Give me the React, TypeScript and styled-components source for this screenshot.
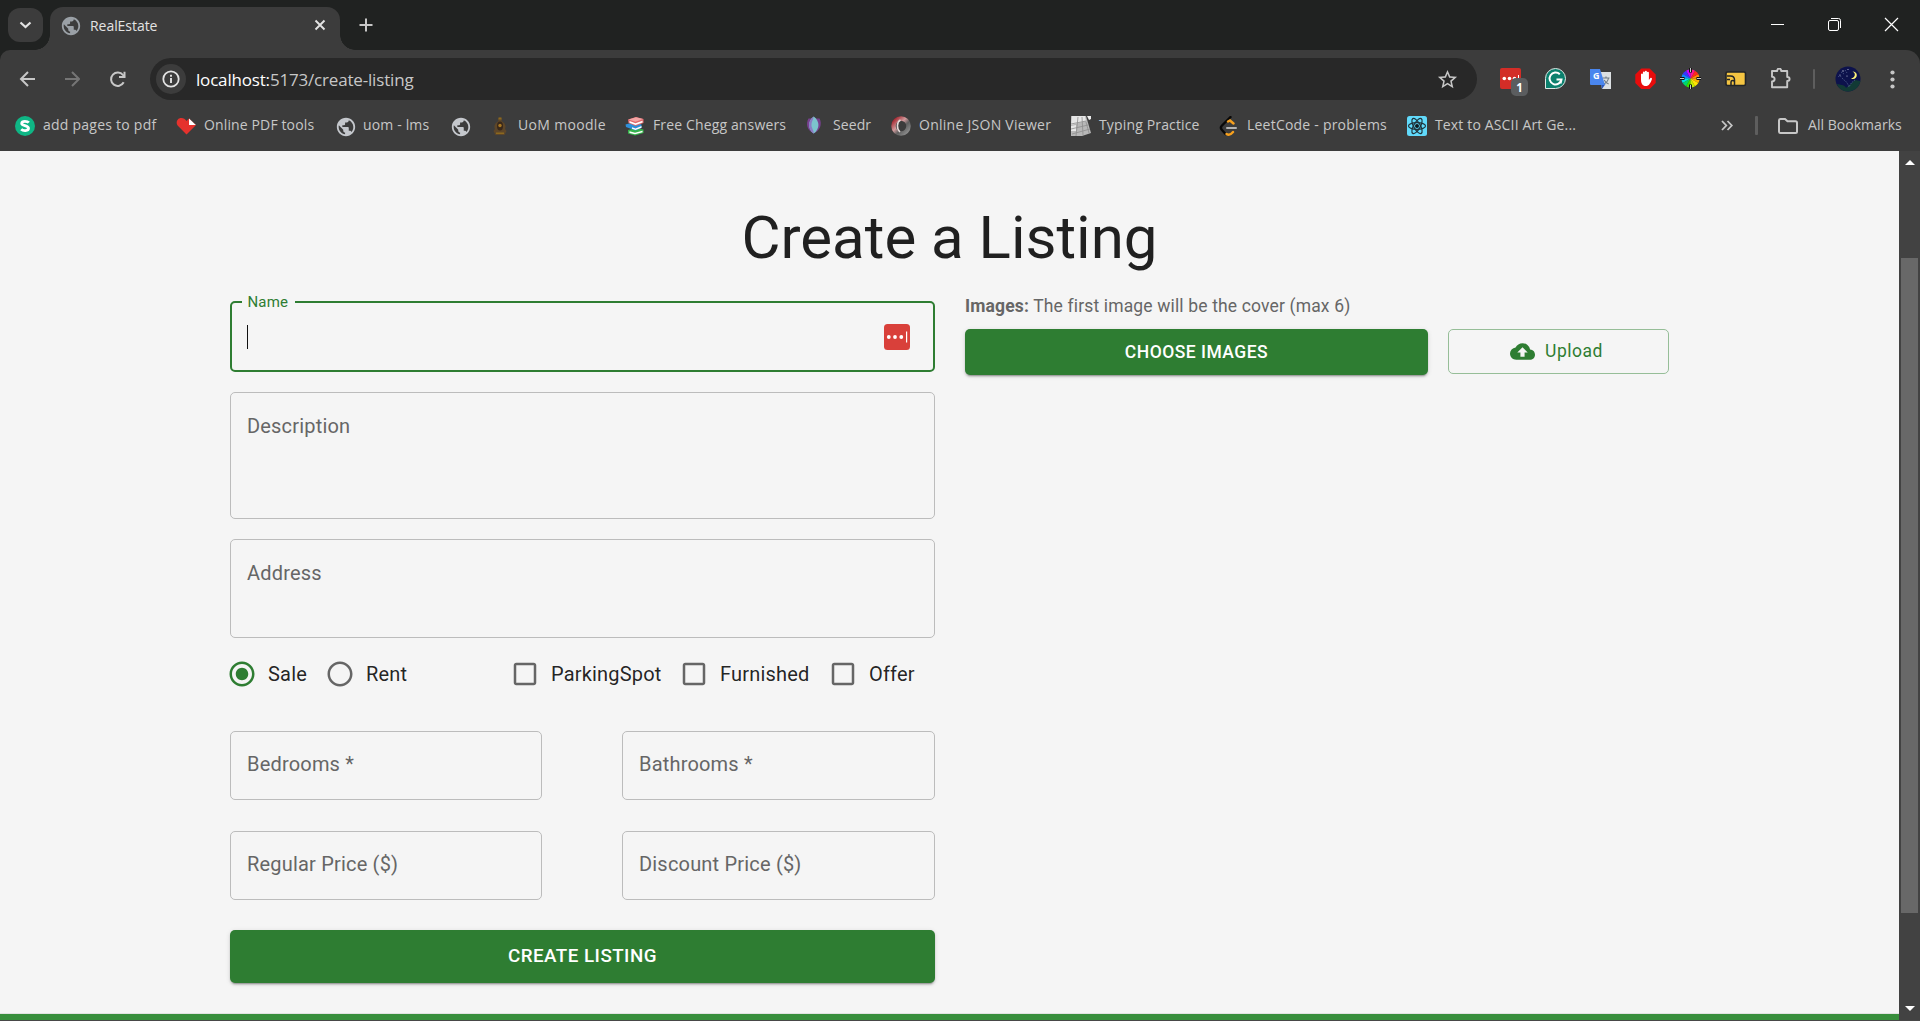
import React from "react";
import styled, { createGlobalStyle, css } from "styled-components";
import {
  MdCheckBoxOutlineBlank,
  MdCloudUpload,
  MdPublic,
  MdRadioButtonChecked,
  MdRadioButtonUnchecked,
  MdStarBorder,
} from "react-icons/md";

const uiFont = `"Open Sans", "Noto Sans", sans-serif`;
const formFont = `Roboto, "Liberation Sans", sans-serif`;
const green = "#2e7d32";

const GlobalStyle = createGlobalStyle`
  *, *::before, *::after { box-sizing: border-box; }
  body { margin: 0; background: #3c3c3c; overflow: hidden; }
  button { font: inherit; border: 0; padding: 0; background: none; color: inherit; }
  svg { display: block; flex: none; }
`;

const Window = styled.div`
  display: flex;
  flex-direction: column;
  width: 1920px;
  height: 1021px;
  background: #202221;
  overflow: hidden;
`;

/* ---------- tab strip ---------- */

const TabStrip = styled.header`
  display: flex;
  height: 50px;
  padding-left: 8px;
  font-family: ${uiFont};
`;

const TabSearch = styled.button`
  display: grid;
  place-items: center;
  width: 35px;
  height: 34px;
  margin-top: 8px;
  border-radius: 12px;
  background: #3c3c3c;
`;

const Tab = styled.div`
  position: relative;
  display: flex;
  align-items: center;
  width: 290px;
  height: 43px;
  margin: 7px 0 0 7px;
  padding: 0 14px 7px 10px;
  border-radius: 13px 13px 0 0;
  background: #3c3c3c;
  color: #e3e3e3;

  &::before,
  &::after {
    content: "";
    position: absolute;
    bottom: 0;
    width: 15px;
    height: 15px;
  }
  &::before {
    left: -15px;
    background: radial-gradient(circle at 0 0, transparent 14.5px, #3c3c3c 15px);
  }
  &::after {
    right: -15px;
    background: radial-gradient(circle at 100% 0, transparent 14.5px, #3c3c3c 15px);
  }
`;

const Text = styled.span<{ $size: number; $spacing?: number; $width?: number }>`
  flex: none;
  font-size: ${(p) => p.$size}px;
  letter-spacing: ${(p) => p.$spacing ?? 0}px;
  ${(p) => p.$width !== undefined && css`width: ${p.$width}px;`}
  white-space: nowrap;
`;

const BookmarkText = styled(Text)`
  padding-bottom: 2px;
`;

const TabTitle = styled(Text)`
  flex: 1;
  margin-left: 10px;
`;

const NewTab = styled.button`
  display: grid;
  place-items: center;
  width: 35px;
  height: 34px;
  margin: 8px 0 0 8px;
`;

const WindowButtons = styled.div`
  display: flex;
  align-items: center;
  gap: 42px;
  margin-left: auto;
  padding: 0 21px 2px 0;
`;

/* ---------- toolbar ---------- */

const Toolbar = styled.div`
  display: flex;
  align-items: center;
  height: 58px;
  padding: 0 20px 0 19px;
  border-radius: 10px 14px 0 0;
  background: #3c3c3c;
  font-family: ${uiFont};
`;

const NavButtons = styled.div`
  display: flex;
  align-items: center;
  gap: 29px;
  width: 131px;
`;

const Omnibox = styled.div`
  display: flex;
  align-items: center;
  width: 1327px;
  height: 42px;
  padding: 0 18px 0 6px;
  border-radius: 21px;
  background: #282828;
  color: #c7c7c7;

  b {
    font-weight: 400;
    color: #ffffff;
  }
`;

const SiteInfo = styled.div`
  display: grid;
  place-items: center;
  width: 30px;
  height: 30px;
  margin-right: 10px;
  border-radius: 50%;
  background: #3c3c3c;
`;

const Url = styled(Text)`
  flex: 1;
  padding-top: 1px;
`;

const Extensions = styled.div`
  display: flex;
  align-items: center;
  gap: 23px;
  margin-left: 23px;
`;

const ExtensionSlot = styled.div`
  position: relative;
  width: 22px;
  height: 22px;
`;

const CountBadge = styled.span`
  position: absolute;
  left: 11px;
  top: 10px;
  display: grid;
  place-items: center;
  width: 17px;
  height: 18px;
  border-radius: 5px;
  background: #5b5d5f;
  color: #ffffff;
  font-size: 11.5px;
  font-weight: 700;
`;

const Divider = styled.i<{ $width: number; $height: number; $margin?: string }>`
  width: ${(p) => p.$width}px;
  height: ${(p) => p.$height}px;
  margin: ${(p) => p.$margin ?? "0"};
  border-radius: 1px;
  background: #5e5e5e;
`;

const Profile = styled.div`
  display: flex;
  align-items: center;
  gap: 29px;
  margin-left: 20px;
`;

/* ---------- bookmarks ---------- */

const BookmarkBar = styled.nav`
  display: flex;
  align-items: center;
  height: 43px;
  padding: 0 18px 8px 15px;
  background: #3c3c3c;
  color: #c7c7c7;
  font-family: ${uiFont};
`;

const Bookmark = styled.a`
  display: flex;
  align-items: center;
  gap: 8px;
  height: 24px;
  margin-right: 20px;
`;

const AllBookmarks = styled.div`
  display: flex;
  align-items: center;
  margin-left: auto;

  ${BookmarkText} {
    margin-left: 9px;
  }
`;

/* ---------- page ---------- */

const Viewport = styled.div`
  display: flex;
  height: 870px;
  border-bottom: 1px solid #474747;
`;

const Page = styled.main`
  display: flex;
  flex-direction: column;
  width: 1899px;
  background: #f5f5f5;
  font-family: ${formFont};
  color: rgba(0, 0, 0, 0.87);
`;

const Title = styled.h1`
  margin: 52px 0 0;
  font-size: 60px;
  font-weight: 400;
  line-height: 70px;
  text-align: center;
`;

const Columns = styled.form`
  display: grid;
  grid-template-columns: 705px 704px;
  gap: 30px;
  width: 1439px;
  margin: 28px 0 0 230px;
`;

const FormColumn = styled.div`
  display: flex;
  flex-direction: column;
`;

const Field = styled.label<{ $height: number; $gap?: number; $focused?: boolean }>`
  position: relative;
  display: flex;
  align-items: flex-start;
  height: ${(p) => p.$height}px;
  margin-top: ${(p) => p.$gap ?? 0}px;
  padding: ${(p) => (p.$gap ? 21 : 20)}px 16px 0;
  border: 1px solid #bcbcbc;
  border-radius: 5px;
  color: #666666;
  font-size: 20px;
  line-height: 25px;
  letter-spacing: 0.19px;
  ${(p) =>
    p.$focused &&
    css`
      padding: 21px 23px 0 15px;
      border: 2px solid ${green};
      justify-content: space-between;
    `}
`;

const FloatingLabel = styled.span`
  position: absolute;
  left: 10px;
  top: -11px;
  width: 53px;
  padding-left: 5.5px;
  background: #f5f5f5;
  color: ${green};
  font-size: 15px;
  line-height: 20px;
  letter-spacing: 0.14px;
`;

const Caret = styled.i`
  width: 1px;
  height: 24px;
  margin-top: 1px;
  background: #111111;
`;

const Options = styled.div`
  display: flex;
  align-items: center;
  height: 30px;
  margin: 21px 0 0 -3px;
  font-size: 20px;
  letter-spacing: 0.19px;
`;

const Option = styled.label<{ $width: number; $checked?: boolean }>`
  display: flex;
  align-items: center;
  gap: 11px;
  flex: none;
  width: ${(p) => p.$width}px;

  svg {
    color: ${(p) => (p.$checked ? green : "#666666")};
  }
`;

const FieldGrid = styled.div`
  display: grid;
  grid-template-columns: 312px 313px;
  gap: 31px 80px;
  margin-top: 42px;
`;

const Button = styled.button<{ $large?: boolean }>`
  height: ${(p) => (p.$large ? 53 : 46)}px;
  border-radius: 5px;
  background: ${green};
  box-shadow: 0 3px 1px -2px rgba(0, 0, 0, 0.2), 0 2px 2px rgba(0, 0, 0, 0.14),
    0 1px 5px rgba(0, 0, 0, 0.12);
  color: #ffffff;
  font-size: ${(p) => (p.$large ? 18.75 : 17.5)}px;
  font-weight: 500;
  letter-spacing: 0.48px;
`;

const CreateButton = styled(Button)`
  margin-top: 30px;
  padding-bottom: 2px;
`;

const Hint = styled.p`
  margin: -8px 0 0;
  height: 26px;
  color: #666666;
  font-size: 17.5px;
  line-height: 26px;
  letter-spacing: 0.15px;

  b {
    font-weight: 700;
  }
`;

const ImageActions = styled.div`
  display: grid;
  grid-template-columns: 463px 221px;
  gap: 20px;
  align-items: start;
  margin-top: 10px;
`;

const UploadButton = styled.button`
  display: flex;
  align-items: center;
  justify-content: center;
  gap: 10px;
  height: 45px;
  padding-right: 4px;
  border: 1px solid #96be98;
  border-radius: 5px;
  color: ${green};
  font-size: 17.5px;
  letter-spacing: 0.5px;

  span {
    padding-bottom: 2px;
  }
`;

const Footer = styled.footer`
  height: 7px;
  margin-top: auto;
  border-top: 1px solid #e2e2e2;
  background: #388e3c;
`;

const Scrollbar = styled.aside`
  display: flex;
  flex-direction: column;
  align-items: center;
  justify-content: space-between;
  width: 21px;
  height: 869px;
  padding: 9px 0 9px;
  background: #424242;
`;

const Thumb = styled.i`
  width: 17px;
  height: 655px;
  margin: 93px 0 auto;
  background: #686868;
`;

const Arrow = styled.i<{ $down?: boolean }>`
  border: 5px solid transparent;
  ${(p) => (p.$down ? "border-top-color: #fff; border-bottom: 0;" : "border-bottom-color: #fff; border-top: 0;")}
`;

/* ---------- icons ---------- */

const GlobeBox = styled.span`
  display: grid;
  place-items: center;
  flex: none;
  width: 20px;
  height: 20px;
`;

const Globe = ({ color = "#c4c7cc" }) => (
  <GlobeBox>
    <MdPublic size={22} color={color} />
  </GlobeBox>
);

const SmallpdfIcon = () => (
  <svg width="20" height="20" viewBox="0 0 20 20">
    <circle cx="10" cy="10" r="10" fill="#0fb685" />
    <path d="M13.8 6.600C12.600 5.200 7 4.400 6.700 7.400c-.2 2.800 6.800 1.800 6.800 4.900 0 3-5.600 2.700-7.300 1" fill="none" stroke="#fff" strokeWidth="2.8" />
  </svg>
);

const HeartIcon = () => (
  <svg width="20" height="20" viewBox="0 0 20 20">
    <path d="M10.5 18.500 1.600 9.500C-.5 6.600 1.200 2 5.200 2c2.500 0 4 1.200 5.300 3L13 2.500l7 6.500z" fill="#e5322d" />
    <path d="M13 2.500V9h6.800z" fill="#fff" />
  </svg>
);

const CrestIcon = () => (
  <svg width="20" height="20" viewBox="0 0 20 20">
    <path d="M10 1 12 3l-.5 2C15 7 16.500 10 15 13l1.500 2-2 4h-9l-2-4L5 13C3.500 10 5 7 8.500 5L8 3z" fill="#5d4629" />
    <ellipse cx="10" cy="10" rx="3" ry="4.500" fill="#38281b" />
    <circle cx="10" cy="9.500" r="1.700" fill="#a77621" />
    <path d="M8.500 1.500h3v2h-3zM6 16.500h8V18H6z" fill="#8c681e" />
  </svg>
);

const BooksIcon = () => (
  <svg width="20" height="20" viewBox="0 0 20 20">
    <path d="m3 14 8-2 7.500 1.500v3.500L10 19.500 3 17.500z" fill="#36b34a" />
    <path d="m4.500 15.300 5.500 1.400 7.500-2v1.600L10 18.300l-5.500-1.200z" fill="#fff" />
    <path d="M.5 8.500 9 6l7.500 2.500V12l-6 2.500L1 11z" fill="#2e8fd9" />
    <path d="m7 11.300 3.500 1.200 6-2.400v1.600l-6 2.300-3.500-1.300z" fill="#fff" />
    <path d="m3 3.500 8-2.500 7.500 2v4l-8 3-7-3z" fill="#e2696c" />
    <path d="m4.500 5 6 2.300 7-2.500v1.700l-7 2.500-6-2.300z" fill="#fff" />
    <path d="m3.500 3.500 7.500-2.300 7 1.800-7.500 2.700z" fill="#f3a5a5" />
  </svg>
);

const SeedrIcon = () => (
  <svg width="20" height="20" viewBox="0 0 20 20">
    <path d="M3.500 2.500C.500 8 2 14 8.500 17.500 15 15 17.500 8 14.500 2.500z" fill="#77408f" />
    <path d="M8.700.5C2.500 5 2.500 13 8.700 17.500 15 13 15 5 8.700.5z" fill="#7cc3cd" />
    <path d="M8.700.5C2.500 5 2.500 13 8.700 17.500 9 14 6 12 6.500 8c.2-3 2-4.500 2.200-7.500z" fill="#8b7cc4" />
  </svg>
);

const JsonIcon = () => (
  <svg width="20" height="20" viewBox="0 0 20 20">
    <defs>
      <linearGradient id="json" x1="0" y1="0" x2="1" y2="1">
        <stop offset="0" stopColor="#a01822" />
        <stop offset=".4" stopColor="#d09a9c" />
        <stop offset=".62" stopColor="#5e5e5e" />
        <stop offset="1" stopColor="#929292" />
      </linearGradient>
    </defs>
    <circle cx="10" cy="10" r="7.500" fill="none" stroke="url(#json)" strokeWidth="4.500" />
    <path d="M9.500 4C5.500 6 5.500 13 9 16" fill="none" stroke="#e8dcdc" strokeWidth="1.600" />
  </svg>
);

const KeyboardIcon = () => (
  <svg width="20" height="20" viewBox="0 0 20 20">
    <path d="M0 0h15l5 17-9 3H0z" fill="#b7b7b7" />
    <path d="M1 0h13l1 5L0 9zM0 10l5-1v6H0z" fill="#e6e6e6" />
    <path d="M0 8 15 5M0 13l17-4M1 18l18-5M7 1 5 20M11 1l1 18M15 6l3 11" stroke="#8d8d8d" strokeWidth=".8" />
    <path d="M16 0h4v3l-2 1z" fill="#eee" />
  </svg>
);

const LeetIcon = () => (
  <svg width="20" height="20" viewBox="0 0 20 20">
    <path d="M11.500 1 3 9.500c-1.500 1.500-1.500 3 0 4.500l3.500 4" fill="none" stroke="#080808" strokeWidth="2.400" strokeLinecap="round" />
    <path d="m9 5.500 2-1 3.500 3M7.500 18c2.500 1.500 4.500.5 6.500-2" fill="none" stroke="#f6a01e" strokeWidth="2.400" strokeLinecap="round" />
    <path d="M8 12h9" stroke="#b3b3b3" strokeWidth="2" strokeLinecap="round" />
  </svg>
);

const ReactIcon = () => (
  <svg width="20" height="20" viewBox="0 0 20 20">
    <rect width="20" height="20" rx="2.500" fill="#61dafb" />
    <g fill="none" stroke="#20343c" strokeWidth="1.200">
      <ellipse cx="10" cy="10" rx="8.500" ry="3.300" />
      <ellipse cx="10" cy="10" rx="8.500" ry="3.300" transform="rotate(60 10 10)" />
      <ellipse cx="10" cy="10" rx="8.500" ry="3.300" transform="rotate(120 10 10)" />
    </g>
    <circle cx="10" cy="10" r="2" fill="#10191d" />
  </svg>
);

const LastPassIcon = () => (
  <svg width="22" height="22" viewBox="0 0 22 22">
    <rect width="21" height="21" rx="2" fill="#d32d27" />
    <g fill="#fff">
      <circle cx="4.300" cy="10.500" r="1.800" />
      <circle cx="9.500" cy="10.500" r="1.800" />
      <circle cx="14.500" cy="10.500" r="1.800" />
      <path d="M18 7h1v7h-1z" />
    </g>
  </svg>
);

const GrammarlyIcon = () => (
  <svg width="22" height="22" viewBox="0 0 22 22">
    <path d="M.5 10.500a10 10 0 1 1 10 10H.5z" fill="#0b806d" stroke="#dce9e6" />
    <path d="M14.800 6.200A6 6 0 1 0 16.500 11.500H11.500M16.500 11.500l-1 4" fill="none" stroke="#fff" strokeWidth="2" />
  </svg>
);

const TranslateLetter = styled.span`
  position: absolute;
  left: 3px;
  top: 2px;
  color: #fff;
  font: 700 9px/12px ${uiFont};
`;

const TranslateIcon = () => (
  <>
    <svg width="22" height="22" viewBox="0 0 22 22">
      <path d="M9 4h12v17H12z" fill="#dce0e3" />
      <path d="M12.500 10h7M16 8.500V10M18.500 10c-.5 3-2.500 5-4.500 6M14.200 12c1 2 2.500 3.500 4.500 4" fill="none" stroke="#707b84" strokeWidth="1.100" />
      <path d="M11 16h4.500L12 21z" fill="#2b56b8" />
      <path d="M0 1h10l5 16H1a1 1 0 0 1-1-1z" fill="#4a86ee" />
    </svg>
    <TranslateLetter>G</TranslateLetter>
  </>
);

const AdblockIcon = () => (
  <svg width="22" height="22" viewBox="0 0 22 22">
    <path d="M6.300.5h8.400l6 6v8.400l-6 6H6.300l-6-6V6.500z" fill="#e80c0c" />
    <path d="M6 11.500V6.300a1 1 0 0 1 1.900 0v4V4.500a1 1 0 0 1 2 0v5V3.700a1 1 0 0 1 2 0v5.800V4.700a1 1 0 0 1 2 0V12l1.500-2a1 1 0 0 1 1.500 1.200C15.500 15 14 18 10.800 18 7.500 18 6 15.500 6 11.500z" fill="#fff" />
  </svg>
);

const wheelColors = ["#ffb000", "#ff8a00", "#ff2a1a", "#ff1493", "#c800ff", "#3b32ff", "#0a86ff", "#00e0e8", "#00d96a", "#35e000", "#c6f000", "#ffe600"];

const ColorWheelIcon = () => (
  <svg width="22" height="22" viewBox="-10.500 -10.500 22 22">
    {wheelColors.map((color, i) => (
      <path key={color} d="M0 0 0-9A9 9 0 0 1 4.500-7.800z" fill={color} transform={`rotate(${90 - i * 30})`} />
    ))}
    <path d="M0-10.500V-6M0 6v4.500M-10.500 0H-6M6 0h4.500" stroke="#111" strokeWidth="3" />
    <path d="M0-10.500v4M0 6.500v4M-10.500 0h4M6.500 0h4" stroke="#c8c8c8" strokeWidth="1" />
  </svg>
);

const YellowCardIcon = () => (
  <svg width="22" height="22" viewBox="0 0 22 22">
    <rect x="1" y="4" width="19.500" height="13.500" rx="1.500" fill="#f5c542" stroke="#222527" strokeWidth="1.600" />
    <path d="M2 8h3.500c2.500 0 4 1.200 4 4v5M6 17v-3c0-2 3.500-2 3.500 0M2 11.500h3" fill="none" stroke="#222527" strokeWidth="1.500" />
  </svg>
);

const PuzzleIcon = () => (
  <svg width="22" height="22" viewBox="0 0 22 22">
    <path d="M2 3h5.200c0-3.300 4-3.300 4 0h6v6c3.200 0 3.200 4 0 4v6.200H2v-5.700c3.500 0 3.500-4.800 0-4.800z" fill="none" stroke="#c7c7c7" strokeWidth="1.900" strokeLinejoin="round" />
  </svg>
);

const AvatarIcon = () => (
  <svg width="26" height="26" viewBox="0 0 26 26">
    <circle cx="13" cy="13" r="12.500" fill="#0d124c" />
    <path d="M2 18c5 1 8 1 9 4l9-8 5.500 1C24 22 18 25.500 13 25.500 8 25.500 3 22 2 18z" fill="#123a35" />
    <path d="M3 11c3-3 4 2 6 3s4 4 5 7c2-4 3-5 6-7M6 6l3 2M10 4l2 3" fill="none" stroke="#50608c" strokeWidth=".8" strokeDasharray="1.500 1" />
    <path d="M17.500 5.500c3.500 1.500 3 6-1.500 7 3 1.500 6-.5 5.800-3.500-.1-2-1.800-3.500-4.300-3.500z" fill="#fff27a" />
    <g fill="#bfc6db">
      <circle cx="8" cy="5" r=".7" />
      <circle cx="13" cy="3.500" r=".6" />
      <circle cx="5" cy="9" r=".6" />
      <circle cx="12" cy="10" r=".6" />
    </g>
  </svg>
);

const bookmarks: { icon: React.ReactNode; label?: string; width?: number; spacing?: number }[] = [
  { icon: <SmallpdfIcon />, label: "add pages to pdf", width: 113, spacing: 0.24 },
  { icon: <HeartIcon />, label: "Online PDF tools", width: 111, spacing: 0.13 },
  { icon: <Globe />, label: "uom - lms", width: 67, spacing: 0.15 },
  { icon: <Globe /> },
  { icon: <CrestIcon />, label: "UoM moodle", width: 87, spacing: 0.32 },
  { icon: <BooksIcon />, label: "Free Chegg answers", width: 132, spacing: 0.14 },
  { icon: <SeedrIcon />, label: "Seedr", width: 38, spacing: 0.1 },
  { icon: <JsonIcon />, label: "Online JSON Viewer", width: 132, spacing: 0.27 },
  { icon: <KeyboardIcon />, label: "Typing Practice", width: 100, spacing: 0.15 },
  { icon: <LeetIcon />, label: "LeetCode - problems", width: 140, spacing: 0.22 },
  { icon: <ReactIcon />, label: "Text to ASCII Art Ge...", width: 141, spacing: 0.15 },
];

const extensions = [GrammarlyIcon, TranslateIcon, AdblockIcon, ColorWheelIcon, YellowCardIcon, PuzzleIcon];

export default function App() {
  return (
    <Window>
      <GlobalStyle />
      <TabStrip>
        <TabSearch aria-label="Search tabs">
          <svg width="13" height="8" viewBox="0 0 13 8">
            <path d="m1.500 1.500 5 4.500 5-4.500" fill="none" stroke="#e3e3e3" strokeWidth="2.200" />
          </svg>
        </TabSearch>
        <Tab>
          <Globe color="#9aa0a6" />
          <TabTitle $size={14} $spacing={-0.05}>RealEstate</TabTitle>
          <svg width="12" height="12" viewBox="0 0 12 12">
            <path d="m1.500 1.500 9 9m0-9-9 9" stroke="#e3e3e3" strokeWidth="1.900" />
          </svg>
        </Tab>
        <NewTab aria-label="New tab">
          <svg width="14" height="14" viewBox="0 0 14 14">
            <path d="M7 .5v13M.5 7h13" stroke="#c7c7c7" strokeWidth="2" />
          </svg>
        </NewTab>
        <WindowButtons>
          <svg width="15" height="15" viewBox="0 0 15 15">
            <path d="M1 7.500h13" stroke="#fff" />
          </svg>
          <svg width="15" height="15" viewBox="0 0 15 15">
            <rect x="1.500" y="3.500" width="10" height="10" rx="1.500" fill="none" stroke="#fff" />
            <path d="M4 1.500h7.500a2 2 0 0 1 2 2V11" fill="none" stroke="#fff" />
          </svg>
          <svg width="15" height="15" viewBox="0 0 15 15">
            <path d="m1 1 13 13m0-13L1 14" stroke="#fff" strokeWidth="1.200" />
          </svg>
        </WindowButtons>
      </TabStrip>

      <Toolbar>
        <NavButtons>
          <svg width="16" height="16" viewBox="0 0 16 16">
            <path d="M16 8H2.300M9 1 2 8l7 7" fill="none" stroke="#c7c7c7" strokeWidth="2" />
          </svg>
          <svg width="16" height="16" viewBox="0 0 16 16">
            <path d="M1 8h13.700M8 1l7 7-7 7" fill="none" stroke="#757575" strokeWidth="2" />
          </svg>
          <svg width="17" height="17" viewBox="0 0 17 17">
            <path d="M14.700 11.300A6.700 6.700 0 1 1 14 4L15.500 6" fill="none" stroke="#c7c7c7" strokeWidth="2" />
            <path d="M15.500.8V6H10" fill="none" stroke="#c7c7c7" strokeWidth="2" />
          </svg>
        </NavButtons>
        <Omnibox>
          <SiteInfo>
            <svg width="18" height="18" viewBox="0 0 18 18">
              <circle cx="9" cy="9" r="7.700" fill="none" stroke="#e3e3e3" strokeWidth="1.800" />
              <path d="M9 8v5M9 4.800v1.900" stroke="#e3e3e3" strokeWidth="1.900" />
            </svg>
          </SiteInfo>
          <Url $size={17} $spacing={-0.18}>
            <b>localhost:</b>5173/create-listing
          </Url>
          <MdStarBorder size={23} color="#c7c7c7" />
        </Omnibox>
        <Extensions>
          <ExtensionSlot>
            <LastPassIcon />
            <CountBadge>1</CountBadge>
          </ExtensionSlot>
          {extensions.map((Icon, i) => (
            <ExtensionSlot key={i}>
              <Icon />
            </ExtensionSlot>
          ))}
          <Divider $width={2} $height={20} $margin="0 0 0 -2px" />
        </Extensions>
        <Profile>
          <AvatarIcon />
          <svg width="5" height="19" viewBox="0 0 5 19">
            <g fill="#c7c7c7">
              <circle cx="2.500" cy="2.500" r="2.100" />
              <circle cx="2.500" cy="9.500" r="2.100" />
              <circle cx="2.500" cy="16.500" r="2.100" />
            </g>
          </svg>
        </Profile>
      </Toolbar>

      <BookmarkBar>
        {bookmarks.map((b, i) => (
          <Bookmark key={i}>
            {b.icon}
            {b.label && (
              <BookmarkText $size={14} $width={b.width} $spacing={b.spacing}>
                {b.label}
              </BookmarkText>
            )}
          </Bookmark>
        ))}
        <AllBookmarks>
          <svg width="12" height="11" viewBox="0 0 12 11">
            <path d="m1 1 4.300 4.500L1 10M6.500 1l4.300 4.500L6.500 10" fill="none" stroke="#c7c7c7" strokeWidth="1.800" />
          </svg>
          <Divider $width={3} $height={19} $margin="0 19px 0 22px" />
          <svg width="22" height="18" viewBox="0 0 22 18">
            <path d="M2 3.500c0-1 .5-1.500 1.500-1.500H8l2.500 2.300h8c1 0 1.500.5 1.500 1.500v8.700c0 1-.5 1.500-1.500 1.500h-15C2.500 16 2 15.500 2 14.500z" fill="none" stroke="#c7c7c7" strokeWidth="2" />
          </svg>
          <BookmarkText $size={14} $width={94} $spacing={0.04}>
            All Bookmarks
          </BookmarkText>
        </AllBookmarks>
      </BookmarkBar>

      <Viewport>
        <Page>
          <Title>Create a Listing</Title>
          <Columns>
            <FormColumn>
              <Field $height={71} $focused>
                <FloatingLabel>Name</FloatingLabel>
                <Caret />
                <svg width="26" height="26" viewBox="0 0 26 26">
                  <rect width="26" height="26" rx="3.500" fill="#d9403a" />
                  <g fill="#fff">
                    <circle cx="4.800" cy="13" r="1.900" />
                    <circle cx="11" cy="13" r="1.900" />
                    <circle cx="17.300" cy="13" r="1.900" />
                    <path d="M22 7.500h1.200v11H22z" />
                  </g>
                </svg>
              </Field>
              <Field $height={127} $gap={20}>Description</Field>
              <Field $height={99} $gap={20}>Address</Field>
              <Options>
                <Option $width={98} $checked><MdRadioButtonChecked size={30} />Sale</Option>
                <Option $width={185}><MdRadioButtonUnchecked size={30} />Rent</Option>
                <Option $width={169}><MdCheckBoxOutlineBlank size={30} />ParkingSpot</Option>
                <Option $width={149}><MdCheckBoxOutlineBlank size={30} />Furnished</Option>
                <Option $width={90}><MdCheckBoxOutlineBlank size={30} />Offer</Option>
              </Options>
              <FieldGrid>
                <Field $height={69}>Bedrooms *</Field>
                <Field $height={69}>Bathrooms *</Field>
                <Field $height={69}>Regular Price ($)</Field>
                <Field $height={69}>Discount Price ($)</Field>
              </FieldGrid>
              <CreateButton type="button" $large>CREATE LISTING</CreateButton>
            </FormColumn>
            <FormColumn>
              <Hint>
                <b>Images:</b> The first image will be the cover (max 6)
              </Hint>
              <ImageActions>
                <Button type="button">CHOOSE IMAGES</Button>
                <UploadButton type="button">
                  <MdCloudUpload size={25} />
                  <span>Upload</span>
                </UploadButton>
              </ImageActions>
            </FormColumn>
          </Columns>
          <Footer />
        </Page>
        <Scrollbar>
          <Arrow />
          <Thumb />
          <Arrow $down />
        </Scrollbar>
      </Viewport>
    </Window>
  );
}
